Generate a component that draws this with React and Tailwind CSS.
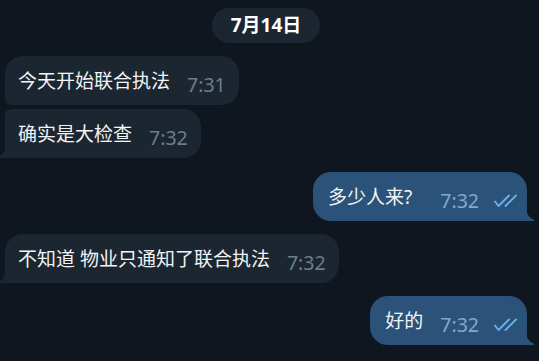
import React from 'react';

const messages = [
    { id: 1, out: false, text: '今天开始联合执法', time: '7:31', tail: false, first: true },
    { id: 2, out: false, text: '确实是大检查', time: '7:32', tail: true, first: false },
    { id: 3, out: true, text: '多少人来?', time: '7:32', tail: true, first: true, gap: 'ml-[28px]' },
    { id: 4, out: false, text: '不知道 物业只通知了联合执法', time: '7:32', tail: true, first: true },
    { id: 5, out: true, text: '好的', time: '7:32', tail: true, first: true },
];

function Checks() {
    return (
        <svg width="26" height="14" viewBox="0 0 26 14" fill="none" stroke="#6cb2ec" strokeWidth="1.8" strokeLinecap="round" strokeLinejoin="round" className="ml-[15px] mb-[3px]">
            <path d="M1 7.5L4.5 12L15 1.5" />
            <path d="M11.5 12L22 1.5" />
        </svg>
    );
}

function Tail({ out }) {
    if (out) {
        return (
            <svg width="10" height="18" viewBox="0 0 10 18" className="absolute bottom-0 right-[-8px]">
                <path d="M0 0C0.5 9 3 14 8.5 16.6C9.6 17.2 9.3 18 8 18L0 18Z" fill="#2b5278" />
            </svg>
        );
    }
    return (
        <svg width="10" height="18" viewBox="0 0 10 18" className="absolute bottom-0 left-[-8px]">
            <path d="M10 0C9.5 9 7 14 1.5 16.6C0.4 17.2 0.7 18 2 18L10 18Z" fill="#1b2631" />
        </svg>
    );
}

function Bubble({ msg }) {
    const shape = msg.out
        ? (msg.tail ? 'rounded-[18px] rounded-br-none' : 'rounded-[18px]')
        : (msg.tail
            ? (msg.first ? 'rounded-[18px] rounded-bl-none' : 'rounded-[18px] rounded-tl-[6px] rounded-bl-none')
            : 'rounded-[18px] rounded-bl-[6px]');
    return (
        <div className={`relative flex items-end w-fit pt-[12px] pb-[10px] ${msg.out ? 'self-end bg-[#2b5278] pl-[15px] pr-[7px]' : 'bg-[#1b2631] pl-[13px] pr-[13px]'} ${shape}`}>
            <span className="text-[19px] leading-[27px] text-[#f2f4f6]">{msg.text}</span>
            <span className={`${msg.gap || 'ml-[17px]'} text-[19.5px] leading-[20px] ${msg.out ? 'text-[#7ea9d2]' : 'text-[#6c7d8c]'}`}>{msg.time}</span>
            {msg.out && <Checks />}
            {msg.tail && <Tail out={msg.out} />}
        </div>
    );
}

export default function App() {
    return (
        <div className="h-screen w-full overflow-hidden bg-[#0f1620] pl-[5px] pr-[12px] pt-[8px] flex flex-col" style={{ fontFamily: '"Noto Sans", "Noto Sans CJK SC", sans-serif' }}>
            <div className="self-center h-[35px] px-[19px] rounded-full bg-[#1b2631] flex items-center text-[19px] font-bold text-white">
                7月14日
            </div>
            <div className="flex flex-col mt-[13px]">
                <Bubble msg={messages[0]} />
                <div className="mt-[4px]"><Bubble msg={messages[1]} /></div>
                <div className="mt-[14px] flex flex-col"><Bubble msg={messages[2]} /></div>
                <div className="mt-[13px]"><Bubble msg={messages[3]} /></div>
                <div className="mt-[13px] flex flex-col"><Bubble msg={messages[4]} /></div>
            </div>
        </div>
    );
}
